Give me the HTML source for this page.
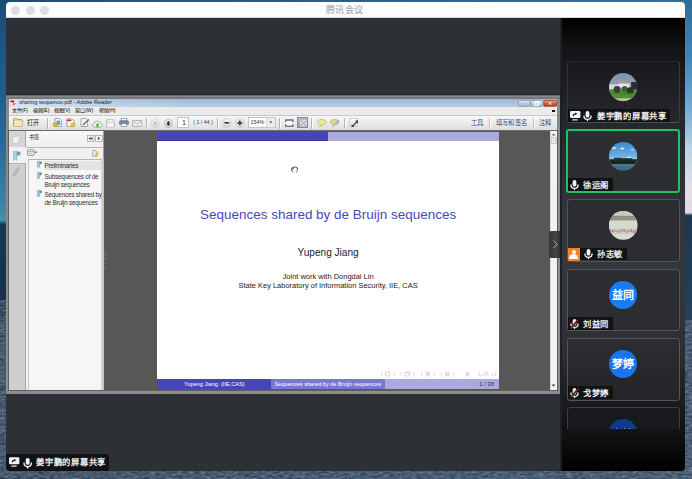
<!DOCTYPE html>
<html lang="zh-CN"><head><meta charset="utf-8">
<style>
*{margin:0;padding:0;box-sizing:border-box}
html,body{width:692px;height:479px;overflow:hidden;font-family:"Liberation Sans",sans-serif}
body{position:relative;background:#3a5474}
.a{position:absolute}
.t{white-space:nowrap;line-height:1}
svg{position:absolute;overflow:visible}
#win{left:6px;top:2px;width:679px;height:469px;border-radius:4px;overflow:hidden;background:#2d3035}
#tbar{left:0;top:0;width:679px;height:15.5px;background:#fdfdfd;border-bottom:1px solid #d8d8d8}
.dot{top:3.5px;width:9px;height:9px;border-radius:50%;background:#dedede}
#ttl{left:320px;top:4.2px;font-size:9px;color:#9c9c9c;letter-spacing:0.3px}
/* pdf window */
#pw{left:6px;top:94px;width:554.5px;height:299.5px;background:linear-gradient(180deg,#222428 0,#222428 1px,#7c7c7c 1.6px,#8a8a8a 2.6px,#6c7075 4px,#8a8a8a 6px,#8e8e8e);}
#ptb{left:9px;top:98.5px;width:548px;height:8.5px;background:linear-gradient(90deg,rgba(230,238,246,0.7) 0%,rgba(230,238,246,0.25) 18%,rgba(230,238,246,0) 35%,rgba(230,238,246,0) 100%),linear-gradient(180deg,#9db6d2,#b7cde4)}
#pmb{left:9px;top:107px;width:548px;height:8px;background:#ebebeb}
#ptool{left:9px;top:115px;width:548px;height:16px;background:linear-gradient(180deg,#f6f6f6,#e9e9e9 60%,#dcdcdc);border-top:1px solid #c9c9c9;border-bottom:1px solid #6c6c6c}
#pcont{left:9px;top:131px;width:548px;height:259px;background:#575757}
#licol{left:9.4px;top:131px;width:16.6px;height:259px;background:#cfcfcf;border-right:1px solid #a4a4a4}
#panel{left:26px;top:131px;width:78.3px;height:259px;background:#f1f1f1;border-right:1px solid #9c9c9c}
#slide{left:156.6px;top:131.6px;width:342.9px;height:257.2px;background:#fff;overflow:hidden}
#sbar{left:549.8px;top:131px;width:7.2px;height:259px;background:#f2f2f2;border-left:1px solid #d8d8d8}
.sep{width:2px;height:11px;top:117.5px;background:linear-gradient(90deg,#b4b4b4 50%,#fbfbfb 50%)}
.mn{top:108.4px;font-size:5px;color:#000}
.tt{font-size:6.4px;color:#34507e;top:119.8px}
/* right panel */
#rp{left:560px;top:17.5px;width:125px;height:453px;border-radius:0 0 4px 0;background:linear-gradient(180deg,#000 0%,#131416 7%,#24272b 22%,#33363a 45%,#34373b 60%,#2c2e32 74%,#1c1d20 84%,#000 100%)}
#rstrip{left:560px;top:17.5px;width:1.8px;height:453px;background:#1d1f22}
.card{left:567px;width:112.5px;height:62.5px;border:1px solid #54565a;border-radius:3px;background:#2b2d31}
.av{width:28px;height:28px;border-radius:50%;left:608.6px;overflow:hidden}
.lb{height:12.6px;background:#111214}
.lbt{font-size:8.3px;color:#ececec;top:2.9px;font-weight:bold;letter-spacing:0.75px}
</style></head><body>

<!-- desktop strips -->
<div class="a" style="left:0;top:0;width:692px;height:8px;background:linear-gradient(90deg,#1c4e7a,#27628f 50%,#3173a0)"></div>
<div class="a" style="left:0;top:0;width:8px;height:479px;background:linear-gradient(180deg,#1b4c76 0%,#1e5580 10%,#2a6a92 30%,#3f80a2 42%,#4e8eaa 46%,#1c3650 46.8%,#17304a 62%,#2c3d52 68%,#2e4055 100%)"></div>
<div class="a" style="left:684px;top:0;width:8px;height:479px;background:linear-gradient(180deg,#2d6b98 0%,#4088bb 12.5%,#78acd2 23%,#bcd4e6 31.3%,#e6dfe6 39.7%,#e0d8e0 44.4%,#1c3650 45%,#22405a 62.6%,#2e4056 67.8%,#32455b 100%)"></div>
<div class="a" style="left:0;top:469px;width:692px;height:10px;background:linear-gradient(90deg,#2c3d52,#2f4156 50%,#32455b)"></div>

<svg style="left:0;top:0" width="692" height="479"><defs><filter id="nz" x="0" y="0" width="100%" height="100%"><feTurbulence type="fractalNoise" baseFrequency="0.18 0.5" numOctaves="2" seed="4"/><feColorMatrix type="matrix" values="0 0 0 0 0.34  0 0 0 0 0.43  0 0 0 0 0.55  0.8 0 0 -0.32 0"/></filter><clipPath id="tclip"><rect x="0" y="300" width="6" height="179"/><rect x="0" y="469" width="692" height="10"/><rect x="685" y="320" width="7" height="159"/></clipPath></defs><rect x="0" y="0" width="692" height="479" filter="url(#nz)" clip-path="url(#tclip)"/></svg>
<div id="win" class="a">
 <div id="tbar" class="a"></div>
 <div class="a dot" style="left:5.3px"></div>
 <div class="a dot" style="left:19.5px"></div>
 <div class="a dot" style="left:33.5px"></div>
 <div id="ttl" class="a t">腾讯会议</div>
</div>

<!-- PDF window -->
<div id="pw" class="a"></div>
<div id="ptb" class="a"></div>
<svg style="left:9.9px;top:99.8px" width="7" height="7" viewBox="0 0 7 7"><rect x="1.2" y="0.6" width="5.3" height="5.6" fill="#f4f0f0"/><rect x="0.3" y="0.4" width="4.2" height="1.8" rx="0.8" fill="#d0101a"/><path d="M3.6 2.2 L2.4 5.2 M3.2 3.8 L6 3.8 M3 5.2 L5 4.6" stroke="#d83040" stroke-width="0.7" fill="none"/></svg>
<div class="a t" style="left:19.3px;top:99.9px;font-size:5.5px;color:#1c2840">sharing sequence.pdf - Adobe Reader</div>
<svg style="left:517.6px;top:99.5px" width="39" height="6.6" viewBox="0 0 39 6.6"><defs><linearGradient id="bg1" x1="0" y1="0" x2="0" y2="1"><stop offset="0" stop-color="#dfe8f2"/><stop offset="0.5" stop-color="#c2d2e4"/><stop offset="1" stop-color="#a6bad2"/></linearGradient><linearGradient id="bg2" x1="0" y1="0" x2="0" y2="1"><stop offset="0" stop-color="#f0a08a"/><stop offset="0.5" stop-color="#dc6048"/><stop offset="1" stop-color="#c03a22"/></linearGradient></defs>
<rect x="0.4" y="0.4" width="11.8" height="5.8" rx="1.2" fill="url(#bg1)" stroke="#7f94ae" stroke-width="0.7"/><rect x="4" y="3.4" width="4.4" height="1.2" fill="#fff" stroke="#5a6a80" stroke-width="0.3"/>
<rect x="12.8" y="0.4" width="12.4" height="5.8" rx="1.2" fill="url(#bg1)" stroke="#7f94ae" stroke-width="0.7"/><rect x="17.6" y="1.4" width="3.6" height="2.8" fill="none" stroke="#fff" stroke-width="0.9"/><rect x="16.4" y="2.6" width="3.6" height="2.8" fill="#c2d2e4" stroke="#fff" stroke-width="0.9"/>
<rect x="25.8" y="0.4" width="12.8" height="5.8" rx="1.2" fill="url(#bg2)" stroke="#8e3020" stroke-width="0.7"/><path d="M30.8 1.9 L33.6 4.7 M33.6 1.9 L30.8 4.7" stroke="#fff" stroke-width="0.9"/></svg>
<div id="pmb" class="a"></div>
<div class="a t mn" style="left:11.6px">文件(F)</div>
<div class="a t mn" style="left:32.7px">编辑(E)</div>
<div class="a t mn" style="left:53.5px">视图(V)</div>
<div class="a t mn" style="left:75.2px">窗口(W)</div>
<div class="a t mn" style="left:98.6px">帮助(H)</div>
<div class="a" style="left:552px;top:109.8px;width:2.6px;height:2.6px;background:#111"></div>
<div id="ptool" class="a"></div>
<!-- toolbar items -->
<svg style="left:12.5px;top:118.3px" width="10.5" height="9" viewBox="0 0 10.5 9"><path d="M0.6 1.2 Q0.6 0.5 1.3 0.5 L3.6 0.5 L4.4 1.6 L8.6 1.6 Q9.2 1.6 9.2 2.3 L9.2 3 L10 3 L9 8.4 L1 8.4 Q0.6 8.4 0.6 7.8 Z" fill="#ead9a0" stroke="#9a8a58" stroke-width="0.8"/><path d="M1.6 3.2 L9.8 3.2 L9 8.3 L0.8 8.3 Z" fill="#f4e6b4"/></svg>
<div class="a t" style="left:26.8px;top:119.5px;font-size:6.3px;color:#111;letter-spacing:0.3px">打开</div>
<div class="a sep" style="left:46.6px"></div>
<svg style="left:53px;top:118.2px" width="10" height="9" viewBox="0 0 10 9"><path d="M2 0.5 L6.5 0.5 L8.6 2.6 L8.6 8.5 L2 8.5 Z" fill="#fafafa" stroke="#888" stroke-width="0.7"/><rect x="3.6" y="2.5" width="3.6" height="4.6" fill="#5aa0dc"/><circle cx="2.3" cy="6.6" r="2.1" fill="#e8b820" stroke="#b08410" stroke-width="0.5"/></svg>
<svg style="left:66px;top:118.2px" width="10" height="9" viewBox="0 0 10 9"><path d="M1 0.8 L5.8 0.8 L8 3 L8 8.5 L1 8.5 Z" fill="#fafafa" stroke="#888" stroke-width="0.7"/><rect x="0.5" y="1.5" width="5" height="1.8" rx="0.8" fill="#d9323a"/><circle cx="7" cy="6.8" r="2" fill="#f0c830" stroke="#c09010" stroke-width="0.5"/></svg>
<svg style="left:80px;top:118.2px" width="10" height="9" viewBox="0 0 10 9"><path d="M1 0.5 L6 0.5 L7.6 2.2 L7.6 8.5 L1 8.5 Z" fill="#f4f4f4" stroke="#8a8a8a" stroke-width="0.7"/><path d="M3 7 L8.8 1.6" stroke="#6a6a6a" stroke-width="1.3"/></svg>
<svg style="left:91.8px;top:119.5px" width="11" height="8" viewBox="0 0 11 8"><path d="M2.5 7 Q0.3 7 0.5 5.2 Q0.7 3.7 2.2 3.8 Q2.6 1 5.3 1 Q8 1 8.4 3.4 Q10.5 3.5 10.5 5.2 Q10.4 7 8.6 7 Z" fill="#f8f8f8" stroke="#8c8c8c" stroke-width="0.7"/><path d="M5.5 3 L7.6 5.2 L6.4 5.2 L6.4 7.6 L4.6 7.6 L4.6 5.2 L3.4 5.2 Z" fill="#3fb43a"/></svg>
<svg style="left:106.2px;top:119px" width="9" height="8.5" viewBox="0 0 9 8.5"><path d="M0.5 0.5 L7.5 0.5 L8.4 1.4 L8.4 8 L0.5 8 Z" fill="#e6e6e6" stroke="#b8b8b8" stroke-width="0.7"/><rect x="2" y="0.8" width="4.5" height="2.4" fill="#f6f6f6" stroke="#c4c4c4" stroke-width="0.5"/><rect x="1.8" y="4.8" width="5.4" height="2.8" fill="#f8f8f8"/></svg>
<svg style="left:118.8px;top:118.4px" width="10" height="9" viewBox="0 0 10 9"><rect x="2.2" y="0.4" width="5.6" height="2.6" fill="#fafafa" stroke="#7a7a7a" stroke-width="0.6"/><rect x="0.4" y="2.8" width="9.2" height="3.6" rx="1" fill="#6d8eac" stroke="#4f6a85" stroke-width="0.6"/><rect x="2.2" y="5.8" width="5.6" height="2.8" fill="#fafafa" stroke="#7a7a7a" stroke-width="0.6"/></svg>
<svg style="left:131.8px;top:119.7px" width="10.2" height="7" viewBox="0 0 10.2 7"><rect x="0.5" y="0.5" width="9.2" height="6" rx="0.6" fill="#ececec" stroke="#a6a6a6" stroke-width="0.8"/><path d="M0.8 0.9 L5.1 4 L9.4 0.9" stroke="#aaa" stroke-width="0.7" fill="none"/></svg>
<div class="a sep" style="left:145.6px"></div>
<svg style="left:151px;top:118.5px" width="8.8" height="8.8" viewBox="0 0 8.8 8.8"><defs><linearGradient id="cg" x1="0" y1="0" x2="0" y2="1"><stop offset="0" stop-color="#fbfbfb"/><stop offset="1" stop-color="#d6d6d6"/></linearGradient></defs><circle cx="4.4" cy="4.4" r="4" fill="url(#cg)" stroke="#c8c8c8" stroke-width="0.7"/><path d="M4.4 1.8 L6.6 4.2 L5.3 4.2 L5.3 6.4 L3.5 6.4 L3.5 4.2 L2.2 4.2 Z" fill="#c4c4c4"/></svg>
<svg style="left:164.3px;top:118.5px" width="8.8" height="8.8" viewBox="0 0 8.8 8.8"><circle cx="4.4" cy="4.4" r="4" fill="url(#cg)" stroke="#a4a4a4" stroke-width="0.7"/><path d="M4.4 7 L6.8 4.4 L5.4 4.4 L5.4 2 L3.4 2 L3.4 4.4 L2 4.4 Z" fill="#333"/></svg>
<div class="a" style="left:177.3px;top:117.4px;width:11.7px;height:10.2px;background:#fff;border:0.8px solid #c4c4c4"></div>
<div class="a t" style="left:182.2px;top:119.6px;font-size:6.4px;color:#222">1</div>
<div class="a t" style="left:193.2px;top:120.2px;font-size:5.3px;color:#3a3a4a;letter-spacing:0">( 1 / 44 )</div>
<div class="a sep" style="left:216.8px"></div>
<svg style="left:222px;top:118.4px" width="9.6" height="9.6" viewBox="0 0 9.6 9.6"><circle cx="4.8" cy="4.8" r="4.3" fill="url(#cg)" stroke="#bcbcbc" stroke-width="0.7"/><path d="M2.4 4.8 L7.2 4.8" stroke="#404040" stroke-width="1.7"/></svg>
<svg style="left:235.2px;top:118.4px" width="9.6" height="9.6" viewBox="0 0 9.6 9.6"><circle cx="4.8" cy="4.8" r="4.3" fill="url(#cg)" stroke="#bcbcbc" stroke-width="0.7"/><path d="M2.4 4.8 L7.2 4.8 M4.8 2.4 L4.8 7.2" stroke="#404040" stroke-width="1.7"/></svg>
<svg style="left:247.9px;top:117.3px" width="27.8" height="10.7" viewBox="0 0 27.8 10.7"><rect x="0.4" y="0.4" width="27" height="9.9" fill="#fff" stroke="#b8b8b8" stroke-width="0.8"/><rect x="18.6" y="0.8" width="8.4" height="9.1" fill="#ececec"/><path d="M18.6 0.8 L18.6 9.9" stroke="#cfcfcf" stroke-width="0.7"/><path d="M21.4 4.6 L24.2 4.6 L22.8 6.2 Z" fill="#333"/></svg>
<div class="a t" style="left:250.4px;top:120.1px;font-size:5.4px;color:#333">154%</div>
<div class="a sep" style="left:279px"></div>
<svg style="left:284.8px;top:118.6px" width="8.6" height="8.4" viewBox="0 0 8.6 8.4"><rect x="1.6" y="1.8" width="5.4" height="4.8" fill="#fafafa"/><path d="M0.7 3 L0.7 1 L7.9 1 L7.9 3" stroke="#6c6c70" stroke-width="1.3" fill="none"/><path d="M0.7 5.2 L0.7 7.4 L7.9 7.4 L7.9 5.2" stroke="#6c6c80" stroke-width="1.3" fill="none"/><path d="M0.2 7.4 L2 7.4 M6.6 7.4 L8.4 7.4" stroke="#7070b8" stroke-width="1.1"/></svg>
<div class="a" style="left:297.2px;top:117.4px;width:10.6px;height:10.2px;background:linear-gradient(#bcbcbc,#a4a4a4);border:0.8px solid #8a8a8a"><svg style="left:1.4px;top:1.4px" width="7" height="6.8" viewBox="0 0 7 6.8"><rect x="0.4" y="0.4" width="6.2" height="6" fill="#e8e8f0"/><path d="M1 1 L6 5.8 M6 1 L1 5.8" stroke="#8686c6" stroke-width="1"/></svg></div>
<div class="a sep" style="left:311px"></div>
<svg style="left:316.8px;top:119.3px" width="9.6" height="8" viewBox="0 0 9.6 8"><path d="M4.8 0.6 Q9.2 0.6 9.2 3.2 Q9.2 5.6 5.2 5.8 L3 7.6 L3.4 5.6 Q0.4 5.2 0.4 3.2 Q0.4 0.6 4.8 0.6 Z" fill="#eeee8a" stroke="#a8a870" stroke-width="0.6"/></svg>
<svg style="left:330.2px;top:118.8px" width="9.4" height="8.6" viewBox="0 0 9.4 8.6"><path d="M4.6 0.6 Q9 0.6 9 3.2 Q9 5.6 5.2 5.8 L3 7.8 L3.2 5.6 Q0.4 5.2 0.4 3.2 Q0.4 0.6 4.6 0.6 Z" fill="#d8d8b0" stroke="#9a9a80" stroke-width="0.6"/><path d="M2 1.6 L2 5.2" stroke="#e8e020" stroke-width="1.6"/><path d="M5 5 L8.6 1.4" stroke="#8a8a8a" stroke-width="1"/></svg>
<div class="a sep" style="left:343.6px"></div>
<div class="a" style="left:348.8px;top:117.8px;width:9.6px;height:9.6px;background:linear-gradient(#fcfcfc,#e2e2e2);border:0.6px solid #d0d0d0"><svg style="left:1px;top:1px" width="7.6" height="7.6" viewBox="0 0 7.6 7.6"><path d="M1 6.6 L6.6 1" stroke="#333" stroke-width="1.1"/><path d="M4.2 0.6 L7 0.6 L7 3.4 Z M0.6 4.2 L0.6 7 L3.4 7 Z" fill="#333"/></svg></div>
<div class="a t tt" style="left:470.8px">工具</div>
<div class="a sep" style="left:489.2px;background:linear-gradient(90deg,#c4c4c4 50%,#fbfbfb 50%)"></div>
<div class="a t tt" style="left:495.6px;letter-spacing:0.35px">填写和签名</div>
<div class="a sep" style="left:532.6px;background:linear-gradient(90deg,#c4c4c4 50%,#fbfbfb 50%)"></div>
<div class="a t tt" style="left:538.8px">注释</div>

<div id="pcont" class="a"></div>
<div id="licol" class="a"></div>
<div class="a" style="left:9.4px;top:131px;width:16.6px;height:16.7px;background:#d6d6d6;border-bottom:1px solid #b4b4b4;border-right:1px solid #a4a4a4"></div>
<svg style="left:12.4px;top:135px" width="9" height="9" viewBox="0 0 9 9"><rect x="2.6" y="0.5" width="5.8" height="7" rx="1" fill="#ececec" stroke="#b8b8b8" stroke-width="0.6"/><rect x="0.6" y="1.6" width="5.8" height="7" rx="1" fill="#f2f2f2" stroke="#b8b8b8" stroke-width="0.6"/></svg>
<div class="a" style="left:9.4px;top:147.1px;width:17.6px;height:16.5px;background:#f1f1f1;border-bottom:1px solid #b4b4b4"></div>
<svg style="left:12.6px;top:150.9px" width="8" height="10" viewBox="0 0 8 10"><path d="M0.6 0.5 L3.8 0.5 L3.8 9.4 L2.2 7.8 L0.6 9.4 Z" fill="#a8d4f0" stroke="#6a9ab8" stroke-width="0.5"/><path d="M3.8 0.5 L5.6 0.5 Q7.6 0.5 7.6 2.6 Q7.6 4.6 5.6 4.6 L3.8 4.6 Z" fill="#6a9aa8"/></svg>
<svg style="left:12px;top:167px" width="9" height="10" viewBox="0 0 9 10"><path d="M2 8.6 L6.8 2.2 Q7.8 1 6.8 0.6 Q6 0.3 5.2 1.4 L1 7 Q0.3 8.2 1.2 8.8 Q2 9.3 2.8 8.2 L6.4 3.4" stroke="#b0b0b0" stroke-width="1.1" fill="none"/></svg>
<div id="panel" class="a"></div>
<div class="a" style="left:26px;top:131px;width:78.3px;height:16.7px;background:linear-gradient(#f8f8f8,#eeeeee);border-bottom:1px solid #b8b8b8;border-right:1px solid #9c9c9c"></div>
<div class="a t" style="left:29.3px;top:135.2px;font-size:5.3px;color:#222">书签</div>
<svg style="left:86.8px;top:135px" width="16" height="7" viewBox="0 0 16 7"><rect x="0.4" y="0.4" width="6.6" height="6.2" fill="#f6f6f6" stroke="#9c9c9c" stroke-width="0.7"/><path d="M3.4 1.8 L1.6 3.5 L3.4 5.2 Z M5.4 1.8 L3.6 3.5 L5.4 5.2 Z" fill="#333"/><rect x="8.6" y="0.4" width="6.6" height="6.2" fill="#f6f6f6" stroke="#9c9c9c" stroke-width="0.7"/><path d="M11 1.8 L12.9 3.5 L11 5.2 Z" fill="#333"/></svg>
<svg style="left:27.4px;top:149.4px" width="10.5" height="7" viewBox="0 0 10.5 7"><rect x="0.5" y="0.8" width="6.6" height="5.6" rx="0.6" fill="#f0f0f0" stroke="#7a7a7a" stroke-width="0.7"/><path d="M0.5 2.6 L7.1 2.6 M1.6 4.4 L5.6 4.4" stroke="#8a8a8a" stroke-width="0.6"/><path d="M7.8 2.8 L10.2 2.8 L9 4.2 Z" fill="#333"/></svg>
<svg style="left:92px;top:149.8px" width="7" height="7" viewBox="0 0 7 7"><path d="M0.6 0.6 L4 0.6 L4.8 1.4 L4.8 6.4 L0.6 6.4 Z" fill="#dfe9f4" stroke="#6a8ab0" stroke-width="0.6"/><path d="M2.4 4.6 L6.4 4.6 L4.4 6.8 Z" fill="#e8b820"/><circle cx="5.2" cy="4" r="1.4" fill="#f0c020"/></svg>
<div class="a" style="left:27.6px;top:158.6px;width:74.2px;height:232px;background:#f6f6f6;border:0.8px solid #c8c8c8;border-top-color:#b4b4b4"></div>
<div class="a" style="left:43.8px;top:161.3px;width:57.6px;height:8.5px;background:#e3e3e3"></div>
<div class="a" style="left:101.4px;top:158px;width:3px;height:232px;background:linear-gradient(90deg,#cfcfcf,#d8d8d8 40%,#b8b8b8)"></div>
<div class="a" style="left:104.4px;top:250px;width:1.2px;height:20px;background:repeating-linear-gradient(180deg,#6e6e6e 0,#6e6e6e 1px,#575757 1px,#575757 2.6px)"></div>
<svg style="left:36.8px;top:160.5px" width="5.4" height="7.2" viewBox="0 0 5.4 7.2"><path d="M0.4 0.4 L2.6 0.4 L2.6 6.8 L1.5 5.8 L0.4 6.8 Z" fill="#9cc8e6" stroke="#5a8aa8" stroke-width="0.4"/><path d="M2.6 0.4 L3.6 0.4 Q5 0.4 5 1.8 Q5 3.2 3.6 3.2 L2.6 3.2 Z" fill="#5a8a98"/></svg>
<svg style="left:36.8px;top:171.8px" width="5.4" height="7.2" viewBox="0 0 5.4 7.2"><path d="M0.4 0.4 L2.6 0.4 L2.6 6.8 L1.5 5.8 L0.4 6.8 Z" fill="#9cc8e6" stroke="#5a8aa8" stroke-width="0.4"/><path d="M2.6 0.4 L3.6 0.4 Q5 0.4 5 1.8 Q5 3.2 3.6 3.2 L2.6 3.2 Z" fill="#5a8a98"/></svg>
<svg style="left:36.8px;top:190px" width="5.4" height="7.2" viewBox="0 0 5.4 7.2"><path d="M0.4 0.4 L2.6 0.4 L2.6 6.8 L1.5 5.8 L0.4 6.8 Z" fill="#9cc8e6" stroke="#5a8aa8" stroke-width="0.4"/><path d="M2.6 0.4 L3.6 0.4 Q5 0.4 5 1.8 Q5 3.2 3.6 3.2 L2.6 3.2 Z" fill="#5a8a98"/></svg>
<div class="a t" style="left:44.4px;top:163.1px;font-size:6.4px;color:#333;letter-spacing:-0.24px">Preliminaries</div>
<div class="a t" style="left:44.4px;top:173.4px;font-size:6.4px;color:#333;line-height:7.4px;letter-spacing:-0.24px">Subsequences of de<br>Bruijn sequences</div>
<div class="a t" style="left:44.4px;top:191.1px;font-size:6.4px;color:#333;line-height:7.8px;letter-spacing:-0.24px">Sequences shared by<br>de Bruijn sequences</div>

<div id="slide" class="a">
 <div class="a" style="left:0;top:0;width:171.3px;height:9.6px;background:#4646b9;border-bottom:0.8px solid #3636a8"></div>
 <div class="a" style="left:171.3px;top:0;width:172px;height:9.6px;background:#aaaadf"></div>
 <svg style="left:133.4px;top:33.6px" width="9" height="9" viewBox="0 0 9 9"><path d="M1.6 5.6 Q1.2 3.8 2.6 2.8 Q4.4 1.6 6.2 2.2 Q7.8 2.8 7.6 4.6" stroke="#555" stroke-width="1.2" fill="none"/><path d="M1.8 5.2 L3 7.4 M7.4 4.6 L6.6 7.4 M2.4 4 L4 3.4" stroke="#6a6a6a" stroke-width="0.9" fill="none"/></svg>
 <div class="a t" style="left:0;width:343px;text-align:center;top:76.3px;font-size:13.47px;color:#4848b6">Sequences shared by de Bruijn sequences</div>
 <div class="a t" style="left:0;width:343px;text-align:center;top:116.2px;font-size:10.07px;color:#222">Yupeng Jiang</div>
 <div class="a t" style="left:0;width:343px;text-align:center;top:141.4px;font-size:7.48px;color:#222">Joint work with Dongdai Lin</div>
 <div class="a t" style="left:0;width:343px;text-align:center;top:150.3px;font-size:7.48px;color:#222">State Key Laboratory of Information Security, IIE, CAS</div>
 
 <div class="a" style="left:0;top:247.8px;width:114.5px;height:9.4px;background:#4646b9"></div>
 <div class="a" style="left:114.5px;top:247.8px;width:114px;height:9.4px;background:#7878d0"></div>
 <div class="a" style="left:228.6px;top:247.8px;width:115px;height:9.4px;background:#aaaadf"></div>
 <div class="a t" style="left:27.4px;top:250.2px;font-size:5.6px;color:#fff">Yupeng Jiang&nbsp; (IIE,CAS)</div>
 <div class="a t" style="left:118px;top:250.2px;font-size:5.6px;color:#fff">Sequences shared by de Bruijn sequences</div>
 <div class="a t" style="left:322.6px;top:250.2px;font-size:5.9px;color:#2a2a55">1 / 38</div>
</div>
<svg style="left:380px;top:371px" width="118" height="6" viewBox="0 0 118 6"><g stroke="#cbcbe2" stroke-width="0.8" fill="#cbcbe2"><path d="M2.9000000000000004 1.4 L1.1 3 L2.9000000000000004 4.6" fill="none"/><rect x="5.4" y="1" width="4.4" height="4" fill="none"/><path d="M13.5 1.4 L15.299999999999999 3 L13.5 4.6" fill="none"/><path d="M22.4 1.4 L20.599999999999998 3 L22.4 4.6" fill="none"/><rect x="25" y="1.6" width="4" height="3.4" fill="none"/><path d="M26 1 L30 1 L30 4" fill="none"/><path d="M33.0 1.4 L34.8 3 L33.0 4.6" fill="none"/><path d="M42.900000000000006 1.4 L41.1 3 L42.900000000000006 4.6" fill="none"/><path d="M45.6 1.2 L50 1.2 M45.6 2.4 L50 2.4 M45.6 3.6 L50 3.6 M45.6 4.8 L50 4.8"/><path d="M53.5 1.4 L55.300000000000004 3 L53.5 4.6" fill="none"/><path d="M62.400000000000006 1.4 L60.6 3 L62.400000000000006 4.6" fill="none"/><path d="M65 1.2 L69.6 1.2 M65 2.4 L69.6 2.4 M65 3.6 L69.6 3.6 M65 4.8 L69.6 4.8"/><path d="M73.0 1.4 L74.8 3 L73.0 4.6" fill="none"/><path d="M85.6 1.2 L89.4 1.2 M85.6 2.4 L89.4 2.4 M85.6 3.6 L89.4 3.6 M85.6 4.8 L89.4 4.8"/><path d="M99 2.4 Q98.6 5 100.8 5 Q103 5 102.6 2.4 M100 0.8 L98.6 2.2 L97.8 0.9" fill="none"/><circle cx="106.2" cy="2.6" r="1.7" fill="none"/><path d="M107.4 3.8 L108.8 5.2"/><path d="M112.4 2.4 Q112 5 114.2 5 Q116.4 5 116 2.4 M114.6 0.8 L116 2.2 L116.8 0.9" fill="none"/></g></svg>
<div id="sbar" class="a"></div>
<div class="a" style="left:8.4px;top:130.4px;width:549.4px;height:260.4px;border:0.8px solid #5e5e5e;border-top:none"></div>
<svg style="left:550.8px;top:132.6px" width="5" height="3.2" viewBox="0 0 5 3.2"><path d="M1 2.6 L2.6 0.6 L4.2 2.6 Z" fill="#555"/></svg>
<div class="a" style="left:550.6px;top:137px;width:6px;height:6.6px;background:linear-gradient(90deg,#ececec,#dadada);border:0.5px solid #cfcfcf"></div>
<svg style="left:550.8px;top:384.4px" width="5" height="3.2" viewBox="0 0 5 3.2"><path d="M0.6 0.4 L2.5 2.8 L4.4 0.4 Z" fill="#4a4a4a"/></svg>
<div class="a" style="left:549px;top:231.3px;width:11.5px;height:26.3px;background:linear-gradient(90deg,#353535,#444 60%,#2a2a2a);border-radius:2.5px 0 0 2.5px"></div>
<svg style="left:552.6px;top:240.4px" width="5" height="8.6" viewBox="0 0 5 8.6"><path d="M0.6 0.5 L4.2 4.3 L0.6 8.1" stroke="#bdbdbd" stroke-width="0.9" fill="none"/></svg>
<!-- right panel -->
<div id="rp" class="a"></div>
<div id="rstrip" class="a"></div>
<div class="a card" style="top:60.5px;background:linear-gradient(180deg,#18191c,#26282c);border-color:#26282c #3a3c40 #4a4c50 #34363a"></div>
<div class="a card" style="top:129.4px;height:63.3px;left:566.2px;width:113.4px;border:2px solid #21c45c;background:#2c2e32"></div>
<div class="a card" style="top:199.3px"></div>
<div class="a card" style="top:268.7px"></div>
<div class="a card" style="top:338.1px;background:linear-gradient(180deg,#2b2d31,#222427)"></div>
<div class="a card" style="top:407px;background:#18191c;border-color:#3c3e42"></div>

<svg style="left:608.6px;top:72.8px" width="28.2" height="28.2" viewBox="0 0 28 28"><defs><clipPath id="cc"><circle cx="14" cy="14" r="14"/></clipPath><linearGradient id="sk1" x1="0" y1="0" x2="0" y2="1"><stop offset="0" stop-color="#7e90ac"/><stop offset="1" stop-color="#a8b6c6"/></linearGradient><linearGradient id="sk2" x1="0" y1="0" x2="0" y2="1"><stop offset="0" stop-color="#3a88d4"/><stop offset="0.5" stop-color="#6eb0e2"/><stop offset="0.62" stop-color="#a8d0ee"/></linearGradient></defs>
<g clip-path="url(#cc)"><rect width="28" height="28" fill="url(#sk1)"/><rect x="0" y="11.2" width="10" height="5.6" fill="#d4d6d2"/><rect x="9.8" y="8.4" width="10.5" height="2.2" fill="#b8948a"/><rect x="9.8" y="10.5" width="10.5" height="4" fill="#e6e6e2"/><rect x="22" y="9" width="6" height="9" fill="#2c2c3a"/><rect x="0" y="16.2" width="28" height="9.2" fill="#4a9030"/><circle cx="8" cy="16.4" r="3.4" fill="#4a3444"/><circle cx="15.6" cy="15.6" r="2.8" fill="#3e5e34"/><circle cx="21" cy="17.6" r="3.4" fill="#263626"/><rect x="0" y="19.6" width="28" height="1" fill="#3c7a28"/><rect x="0" y="25.2" width="28" height="3" fill="#c8b898"/></g></g></svg>
<svg style="left:608.6px;top:142px" width="28.4" height="28.4" viewBox="0 0 28 28"><g clip-path="url(#cc)"><rect width="28" height="28" fill="url(#sk2)"/><ellipse cx="5" cy="6" rx="2.2" ry="0.8" fill="#e4f0f8"/><ellipse cx="13" cy="6.4" rx="1.8" ry="0.9" fill="#f4f8fc"/><ellipse cx="23" cy="7.6" rx="1.6" ry="0.7" fill="#c8e0f2"/><ellipse cx="20" cy="15" rx="2.4" ry="0.8" fill="#cfe4f4"/><rect x="0" y="17" width="28" height="5.6" fill="#17251e"/><rect x="5" y="15.6" width="8" height="3" fill="#1e3028"/><rect x="13" y="16" width="10" height="2" fill="#22342a"/><rect x="0" y="22.4" width="28" height="6" fill="#3a6a88"/><rect x="0" y="22" width="28" height="1.2" fill="#5a8aa4"/></g></svg>
<svg style="left:608.7px;top:211.2px" width="28.6" height="28.8" viewBox="0 0 28 28"><g clip-path="url(#cc)"><rect width="28" height="28" fill="#d4d8cc"/><rect x="0" y="0" width="28" height="4.6" fill="#c6cabe"/><rect x="0" y="4.6" width="28" height="4.6" fill="#928a7a"/><rect x="0" y="6.4" width="28" height="1" fill="#a69e8e"/><rect x="0" y="9.4" width="28" height="7.6" fill="#d6dace"/><rect x="0" y="17" width="28" height="6" fill="#cfccc4"/><rect x="0.5" y="18.0" width="1.6" height="2.4" fill="#c86a60"/><rect x="2.8" y="18.5" width="1.6" height="2.4" fill="#7a8ac0"/><rect x="5.1" y="18.2" width="1.6" height="2.4" fill="#d0a860"/><rect x="7.4" y="18.6" width="1.6" height="2.4" fill="#8aa870"/><rect x="9.7" y="18.6" width="1.6" height="2.4" fill="#d88a58"/><rect x="12.0" y="17.7" width="1.6" height="2.4" fill="#9a86c0"/><rect x="14.3" y="17.6" width="1.6" height="2.4" fill="#c87a98"/><rect x="16.6" y="18.9" width="1.6" height="2.4" fill="#78a0c0"/><rect x="18.9" y="18.0" width="1.6" height="2.4" fill="#c0a070"/><rect x="21.2" y="18.0" width="1.6" height="2.4" fill="#a07ab0"/><rect x="23.5" y="19.2" width="1.6" height="2.4" fill="#c86a60"/><rect x="25.8" y="18.4" width="1.6" height="2.4" fill="#7a8ac0"/><rect x="0" y="23" width="28" height="5" fill="#dcdcd4"/></g></svg>
<div class="a av" style="top:280.7px;background:#1a7cf5"><div class="a t" style="left:0;width:28px;text-align:center;top:9px;font-size:11px;color:#fff;font-weight:bold">益同</div></div>
<div class="a av" style="top:350.1px;background:#1a74ee"><div class="a t" style="left:0;width:28px;text-align:center;top:9.2px;font-size:11px;color:#fff;font-weight:bold">梦婷</div></div>
<div class="a av" style="top:419.2px;background:#0c3c8a"><div class="a" style="left:7.6px;top:8.8px;width:1px;height:1px;background:#8a9ab8"></div><div class="a" style="left:15.6px;top:8.8px;width:1px;height:1px;background:#8a9ab8"></div><div class="a" style="left:20.4px;top:8.8px;width:1px;height:1px;background:#8a9ab8"></div></div>

<div class="a" style="left:561.8px;top:428.8px;width:123.2px;height:42px;border-radius:0 0 4px 0;background:linear-gradient(180deg,#131416 0%,#08090a 60%,#000 100%)"></div>

<div class="a lb" style="left:568px;top:109px;width:102px"><div class="a t lbt" style="left:28.8px">姜宇鹏的屏幕共享</div></div>
<div class="a lb" style="left:567.8px;top:178.4px;width:45.5px"><div class="a t lbt" style="left:15.1px">徐运阁</div></div>
<div class="a" style="left:567.6px;top:247.6px;width:12.1px;height:13.4px;background:#f5821f"><div class="a" style="left:4px;top:2px;width:4px;height:4px;border-radius:50%;background:#fff"></div><div class="a" style="left:1.4px;top:6.8px;width:9.4px;height:4.8px;border-radius:4.5px 4.5px 0 0;background:#fff"></div></div>
<div class="a lb" style="left:579.7px;top:247.6px;width:47.3px"><div class="a t lbt" style="left:17.2px">孙志敏</div></div>
<div class="a lb" style="left:567.8px;top:317px;width:44.8px"><div class="a t lbt" style="left:15.2px">刘益同</div></div>
<div class="a lb" style="left:567.8px;top:386.3px;width:44.8px"><div class="a t lbt" style="left:15.2px">戈梦婷</div></div>

<!-- bottom-left badge -->
<div class="a" style="left:6px;top:454.3px;width:103px;height:16.5px;background:#111214;border-radius:0 2px 0 4px"></div>
<div class="a t" style="left:36px;top:458.3px;font-size:8.3px;color:#ececec;font-weight:bold;letter-spacing:0.75px">姜宇鹏的屏幕共享</div>

<svg style="left:569.6px;top:111.2px" width="10.4" height="10" viewBox="0 0 10.4 10"><rect x="0" y="0" width="10.4" height="6.9" rx="1.2" fill="#f4f4f4"/><path d="M3 5 Q3.4 3.2 5.6 2.9" stroke="#141517" stroke-width="1.2" fill="none"/><path d="M5.1 1.6 L7.4 2.7 L5.3 4.1 Z" fill="#141517"/><rect x="2.2" y="8.2" width="5.6" height="1.3" rx="0.6" fill="#e8e8e8"/></svg>
<svg style="left:583.4px;top:111.2px" width="9" height="10.2" viewBox="0 0 9 10.2"><rect x="2.6" y="0" width="3.8" height="6.6" rx="1.9" fill="#f4f4f4"/><path d="M0.9 4.4 Q0.9 8.4 4.5 8.4 Q8.1 8.4 8.1 4.4" stroke="#f4f4f4" stroke-width="1.3" fill="none"/><rect x="3.9" y="8.2" width="1.2" height="2" fill="#f4f4f4"/></svg>
<svg style="left:569.9px;top:180.3px" width="9" height="10.2" viewBox="0 0 9 10.2"><rect x="2.6" y="0" width="3.8" height="6.6" rx="1.9" fill="#f4f4f4"/><path d="M0.9 4.4 Q0.9 8.4 4.5 8.4 Q8.1 8.4 8.1 4.4" stroke="#f4f4f4" stroke-width="1.3" fill="none"/><rect x="3.9" y="8.2" width="1.2" height="2" fill="#f4f4f4"/></svg>
<svg style="left:584px;top:249.4px" width="9" height="10.2" viewBox="0 0 9 10.2"><rect x="2.6" y="0" width="3.8" height="6.6" rx="1.9" fill="#f4f4f4"/><path d="M0.9 4.4 Q0.9 8.4 4.5 8.4 Q8.1 8.4 8.1 4.4" stroke="#f4f4f4" stroke-width="1.3" fill="none"/><rect x="3.9" y="8.2" width="1.2" height="2" fill="#f4f4f4"/></svg>
<svg style="left:570px;top:319px" width="9" height="10.2" viewBox="0 0 9 10.2"><rect x="2.6" y="0" width="3.8" height="6.6" rx="1.9" fill="#e8e8e8"/><path d="M0.9 4.4 Q0.9 8.4 4.5 8.4 Q8.1 8.4 8.1 4.4" stroke="#e8e8e8" stroke-width="1.3" fill="none"/><rect x="3.9" y="8.2" width="1.2" height="2" fill="#e8e8e8"/><path d="M8.4 0.6 L0.6 9.4" stroke="#141517" stroke-width="1.8"/><path d="M8.4 0.6 L0.6 9.4" stroke="#e0302a" stroke-width="0.9"/></svg>
<svg style="left:570px;top:388.3px" width="9" height="10.2" viewBox="0 0 9 10.2"><rect x="2.6" y="0" width="3.8" height="6.6" rx="1.9" fill="#e8e8e8"/><path d="M0.9 4.4 Q0.9 8.4 4.5 8.4 Q8.1 8.4 8.1 4.4" stroke="#e8e8e8" stroke-width="1.3" fill="none"/><rect x="3.9" y="8.2" width="1.2" height="2" fill="#e8e8e8"/><path d="M8.4 0.6 L0.6 9.4" stroke="#141517" stroke-width="1.8"/><path d="M8.4 0.6 L0.6 9.4" stroke="#e0302a" stroke-width="0.9"/></svg>
<svg style="left:9.2px;top:457.1px" width="10.4" height="10.6" viewBox="0 0 10.4 10"><rect x="0" y="0" width="10.4" height="6.9" rx="1.2" fill="#f4f4f4"/><path d="M3 5 Q3.4 3.2 5.6 2.9" stroke="#141517" stroke-width="1.2" fill="none"/><path d="M5.1 1.6 L7.4 2.7 L5.3 4.1 Z" fill="#141517"/><rect x="2.2" y="8.2" width="5.6" height="1.3" rx="0.6" fill="#e8e8e8"/></svg>
<svg style="left:22.8px;top:457.6px" width="9.4" height="10.6" viewBox="0 0 9 10.2"><rect x="2.6" y="0" width="3.8" height="6.6" rx="1.9" fill="#f4f4f4"/><path d="M0.9 4.4 Q0.9 8.4 4.5 8.4 Q8.1 8.4 8.1 4.4" stroke="#f4f4f4" stroke-width="1.3" fill="none"/><rect x="3.9" y="8.2" width="1.2" height="2" fill="#f4f4f4"/></svg>
</body></html>
